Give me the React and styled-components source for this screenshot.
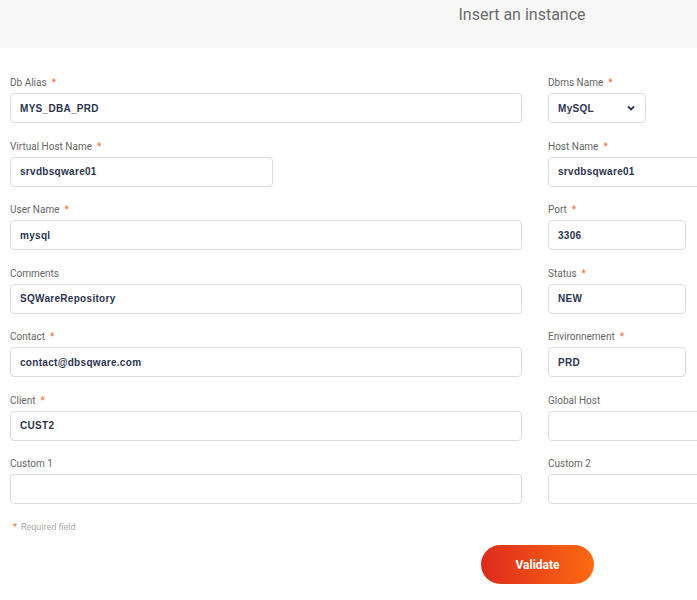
import React from 'react';
import styled, { createGlobalStyle } from 'styled-components';

const Global = createGlobalStyle`
  body { margin: 0; background: #fff; overflow: hidden; font-family: Roboto, "Liberation Sans", sans-serif; }
`;

const Viewport = styled.div`
  width: 100vw;
  overflow: hidden;
`;

const Page = styled.div`
  width: 1044px;
`;

const Header = styled.header`
  height: 48px;
  background: #f8f8f8;
  display: flex;
  justify-content: center;
  padding-top: 5px;
  box-sizing: border-box;
  font-size: 16px;
  color: #6b6b6b;
`;

const Form = styled.div`
  display: grid;
  grid-template-columns: 512px 260px;
  column-gap: 26px;
  row-gap: 16.5px;
  padding: 28px 10px 0;
`;

const Field = styled.div`
  display: flex;
  flex-direction: column;
`;

const Label = styled.label`
  font-size: 10px;
  color: #666;
  height: 17px;
  line-height: 14px;
`;

const Star = styled.span`
  color: #f26a2e;
  margin-left: 5px;
`;

const Input = styled.div`
  box-sizing: border-box;
  height: 30px;
  width: ${p => p.$w || '100%'};
  border: 1px solid #dcdcdc;
  border-radius: 4px;
  padding: 0 9px;
  display: flex;
  align-items: center;
  justify-content: space-between;
  font-family: "Liberation Sans", Arial, sans-serif;
  font-weight: bold;
  font-size: 10px;
  color: #2c3450;
  letter-spacing: 0.3px;
`;

const Footer = styled.div`
  padding: 18px 0 0 13px;
  font-size: 9px;
  color: #aaa;
`;

const Actions = styled.div`
  width: 594px;
  display: flex;
  justify-content: flex-end;
  margin-top: 13px;
`;

const Button = styled.button`
  width: 113px;
  height: 39px;
  border: none;
  border-radius: 20px;
  background: linear-gradient(90deg, #dd2b1c, #fc6a12);
  color: #fff;
  font-weight: bold;
  font-size: 12px;
  font-family: Roboto, "Liberation Sans", sans-serif;
`;

const Chevron = () => (
  <svg width="10" height="8" viewBox="0 0 10 8">
    <path d="M2 2.5 L5 5.5 L8 2.5" fill="none" stroke="#2c3450" strokeWidth="1.8" />
  </svg>
);

const F = ({ label, req, value, w, select }) => (
  <Field>
    <Label>{label}{req && <Star>*</Star>}</Label>
    <Input $w={w}>{value}{select && <Chevron />}</Input>
  </Field>
);

export default function App() {
  return (
    <Viewport>
      <Global />
      <Page>
        <Header>Insert an instance</Header>
        <Form>
          <F label="Db Alias" req value="MYS_DBA_PRD" />
          <F label="Dbms Name" req value="MySQL" w="98px" select />
          <F label="Virtual Host Name" req value="srvdbsqware01" w="263px" />
          <F label="Host Name" req value="srvdbsqware01" />
          <F label="User Name" req value="mysql" />
          <F label="Port" req value="3306" w="138px" />
          <F label="Comments" value="SQWareRepository" />
          <F label="Status" req value="NEW" w="138px" />
          <F label="Contact" req value="contact@dbsqware.com" />
          <F label="Environnement" req value="PRD" w="138px" />
          <F label="Client" req value="CUST2" />
          <F label="Global Host" value="" />
          <F label="Custom 1" value="" />
          <F label="Custom 2" value="" />
        </Form>
        <Footer><Star style={{ marginLeft: 0, marginRight: 4 }}>*</Star>Required field</Footer>
        <Actions><Button>Validate</Button></Actions>
      </Page>
    </Viewport>
  );
}
